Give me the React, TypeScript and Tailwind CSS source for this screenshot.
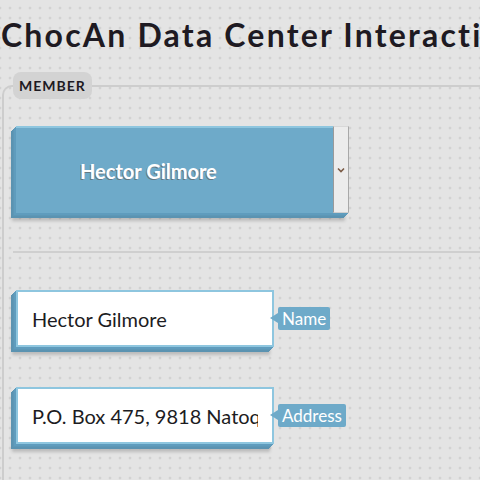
import React from "react";

function Tag({ label }: { label: string }) {
  return (
    <div className="relative ml-[4px] flex h-[23px] items-center rounded-[2px] bg-[#6eaac9] px-[4px] text-[17px] leading-[23px] text-white">
      <span className="absolute left-[-8px] top-[6px] h-0 w-0 border-y-[5px] border-r-[8px] border-y-transparent border-r-[#6eaac9]" />
      {label}
    </div>
  );
}

function Field({ value, label }: { value: string; label: string }) {
  return (
    <div className="flex items-center">
      <div className="ml-[3px] flex h-[57px] w-[258px] items-center overflow-hidden whitespace-nowrap border-2 border-[#8ec6df] bg-white pl-[14px] pr-[14px] text-[20px] text-[#1c1c22] shadow-[-1px_1px_0_#5f9cbd,-2px_2px_0_#5f9cbd,-3px_3px_0_#5d97b6,-4px_4px_0_#5b93b1,-5px_5px_0_#5b93b1,-4px_8px_3px_rgba(0,0,0,0.18)]">
        <span className="block overflow-hidden">{value}</span>
      </div>
      <Tag label={label} />
    </div>
  );
}

export default function App() {
  return (
    <div className="h-[480px] w-[480px] overflow-hidden bg-[#e4e4e4] bg-[radial-gradient(circle,#d2d2d2_1.1px,transparent_1.7px)] bg-[length:10px_10px] bg-[position:5px_3px] font-['Lato',sans-serif]">
      <h1 className="whitespace-nowrap pl-[1px] pt-[15px] text-[32px] font-bold leading-[40px] tracking-[2.2px] text-[#1e1a22]">
        ChocAn Data Center Interaction
      </h1>
      <fieldset className="ml-[2px] mt-[17px] h-[420px] rounded-tl-[10px] border-2 border-b-0 border-r-0 border-[#cdcdcd] pl-[9px]">
        <legend className="h-[27px] rounded-[8px] bg-[#d3d3d3] px-[6px] text-[14px] font-bold leading-[27px] tracking-[1px] text-[#1e1a22]">
          MEMBER
        </legend>
        <div className="ml-[3px] mt-[27px] flex h-[87px] w-[333px] shadow-[-1px_1px_0_#5f9cbd,-2px_2px_0_#5f9cbd,-3px_3px_0_#5d97b6,-4px_4px_0_#5b93b1,-5px_5px_0_#5b93b1,-4px_8px_3px_rgba(0,0,0,0.18)]">
          <div className="flex flex-1 items-center border-t-2 border-[#8ec6df] bg-[#6eaac9] pl-[64px] text-[20px] font-bold text-white [text-shadow:-1px_1px_0_rgba(90,70,60,0.5)]">
            Hector Gilmore
          </div>
          <div className="flex w-[16px] items-center justify-center border border-l-[#9a9a9a] border-r-[#a8a8a8] border-b-[#cfcfcf] border-t-[#d8d8d8] bg-[#ececec]">
            <svg width="8" height="6" viewBox="0 0 8 6">
              <path d="M1 1.5 L4 4.5 L7 1.5" fill="none" stroke="#7a5a45" strokeWidth="1.6" />
            </svg>
          </div>
        </div>
        <div className="mt-[38px] h-[2px] bg-[#cfcfcf]" />
        <div className="mt-[37px]">
          <Field value="Hector Gilmore" label="Name" />
        </div>
        <div className="mt-[40px]">
          <Field value="P.O. Box 475, 9818 Natoque Av." label="Address" />
        </div>
      </fieldset>
    </div>
  );
}
